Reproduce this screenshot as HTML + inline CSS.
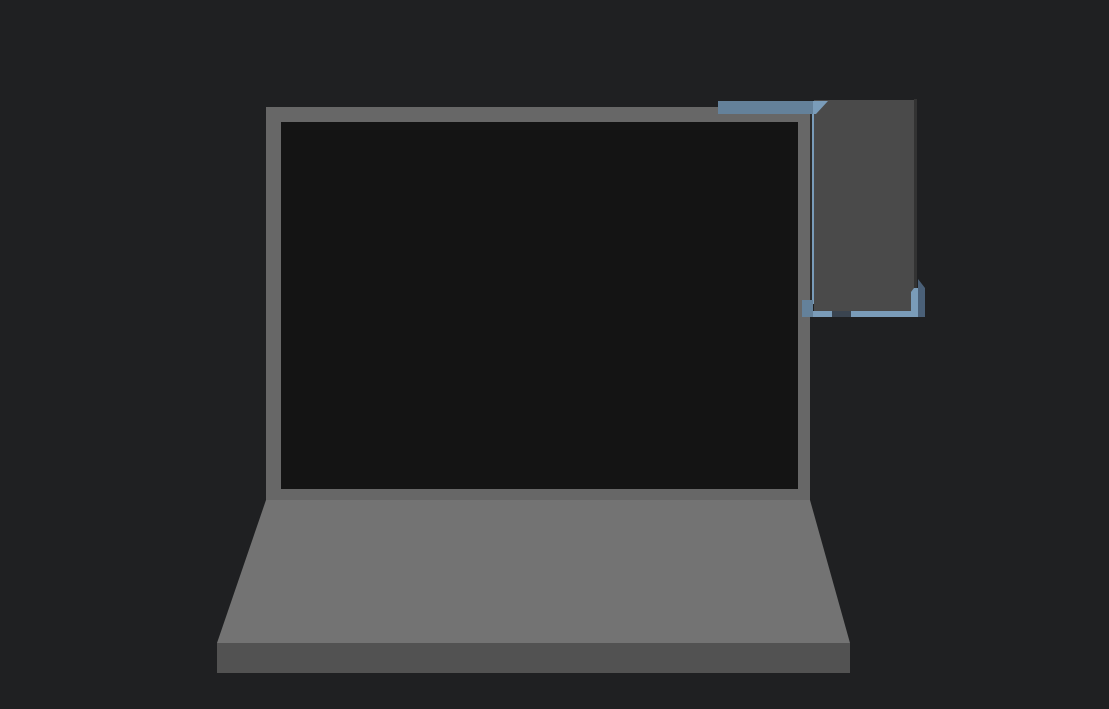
<!DOCTYPE html><html><head><style>html,body{margin:0;background:#1f2022;width:1109px;height:709px;overflow:hidden}</style></head><body>
<svg width="1109" height="709" xmlns="http://www.w3.org/2000/svg">
<rect width="1109" height="709" fill="#1f2022"/>
<rect x="266" y="107" width="544" height="394" fill="#676767"/>
<rect x="281" y="122" width="517" height="367" fill="#141414"/>
<polygon points="266,500 810,500 850,643 217,643" fill="#737373"/>
<rect x="217" y="643" width="633" height="30" fill="#525252"/>
<rect x="718" y="101" width="95" height="13" fill="#64819a"/>
<rect x="810" y="114" width="2" height="186" fill="#2a2a2a"/>
<rect x="814" y="100" width="100" height="211" fill="#4a4a4a"/>
<rect x="914" y="99" width="3" height="190" fill="#333"/>
<rect x="812" y="114" width="2" height="190" fill="#7a9cb9"/>
<polygon points="813,101 828,101 816,114 813,114" fill="#7a9cb9"/>
<rect x="802" y="300" width="11" height="17" fill="#64819a"/>
<rect x="813" y="311" width="105" height="6" fill="#7a9cb9"/>
<rect x="832" y="311" width="19" height="6" fill="#3a4450"/>
<polygon points="911,292 914,288 918,288 918,317 911,317" fill="#7a9cb9"/>
<polygon points="918,279 925,288 925,317 918,317" fill="#4a6078"/>
</svg></body></html>
